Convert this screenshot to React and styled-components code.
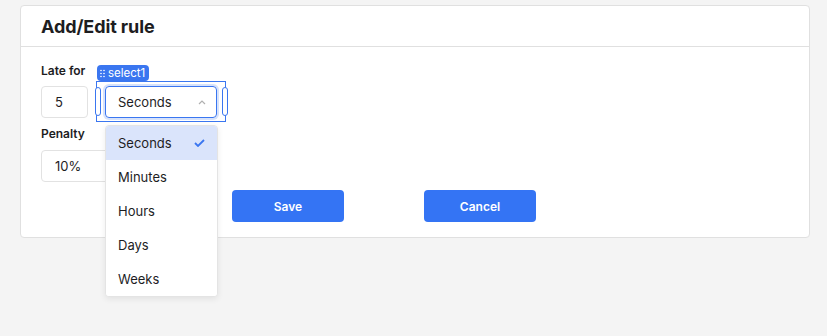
import React from 'react';
import styled, { createGlobalStyle } from 'styled-components';

const Global = createGlobalStyle`
  html, body {
    margin: 0;
    background: #f4f4f4;
    font-family: Inter, "Noto Sans", sans-serif;
    color: #1d1d1f;
  }
`;

const Page = styled.div`
  box-sizing: border-box;
  min-height: 100vh;
  padding: 5px 17px 0 20px;
`;

const Card = styled.div`
  background: #fff;
  border: 1px solid #e0e0e0;
  border-radius: 4px;
  width: 788px;
  box-sizing: content-box;
`;

const Header = styled.div`
  height: 40px;
  display: flex;
  align-items: center;
  padding: 0 20px;
  border-bottom: 1px solid #e0e0e0;
`;

const Title = styled.h1`
  margin: 0;
  font-size: 18px;
  font-weight: 700;
  letter-spacing: -0.1px;
`;

const Body = styled.div`
  padding: 16px 20px 15px;
  display: flex;
  flex-direction: column;
`;

const Label = styled.div`
  font-size: 12px;
  font-weight: 600;
  line-height: 16px;
  height: 16px;
  margin-bottom: ${p => p.$gap || 7}px;
`;

const Row = styled.div`
  display: flex;
  align-items: flex-start;
  gap: 17px;
  margin-bottom: 8px;
`;

const Input = styled.div`
  box-sizing: border-box;
  width: ${p => p.$w}px;
  height: 32px;
  border: 1px solid #e2e2e2;
  border-radius: 4px;
  display: flex;
  align-items: center;
  padding-left: 13px;
  font-size: 13px;
`;

const SelectWrap = styled.div`
  position: relative;
  width: 112px;
  height: 32px;
`;

const SelectBox = styled.div`
  box-sizing: border-box;
  width: 112px;
  height: 32px;
  border: 1px solid #3a76f0;
  border-radius: 4px;
  box-shadow: 0 0 0 2px #d6e2fb;
  display: flex;
  align-items: center;
  justify-content: space-between;
  padding: 0 10px 0 12px;
  font-size: 13px;
`;

const Outline = styled.div`
  position: absolute;
  left: -9px;
  top: -5px;
  width: 130px;
  height: 41px;
  box-sizing: border-box;
  border: 1px solid #3a76f0;
  pointer-events: none;
`;

const Handle = styled.div`
  position: absolute;
  top: 5px;
  ${p => (p.$side === 'left' ? 'left: -2px;' : 'right: -3px;')}
  width: 6px;
  height: 29px;
  box-sizing: border-box;
  border: 1px solid #3a76f0;
  border-radius: 4px;
  background: #fff;
`;

const Tag = styled.div`
  position: absolute;
  left: -8px;
  top: -21px;
  height: 16px;
  padding: 0 4px 0 3px;
  border-radius: 4px;
  background: #3a76f0;
  color: #fff;
  font-size: 11.5px;
  line-height: 16px;
  display: flex;
  align-items: center;
  gap: 2px;
`;

const Menu = styled.div`
  position: absolute;
  top: 39px;
  left: 0;
  width: 111px;
  background: #fff;
  border: 1px solid #e4e4e4;
  border-radius: 4px;
  box-shadow: 0 2px 6px rgba(0, 0, 0, 0.08);
  overflow: hidden;
  z-index: 2;
`;

const Option = styled.div`
  height: 34px;
  display: flex;
  align-items: center;
  justify-content: space-between;
  padding: 0 12px 0 12px;
  font-size: 13px;
  background: ${p => (p.$active ? '#dae4fb' : '#fff')};
`;

const Actions = styled.div`
  display: flex;
  gap: 80px;
  padding-left: 191px;
`;

const Button = styled.button`
  width: 112px;
  height: 32px;
  border: none;
  border-radius: 4px;
  background: #3474f4;
  color: #fff;
  font-family: inherit;
  font-size: 12px;
  font-weight: 600;
`;

const Grip = () => (
  <svg width="6" height="9" viewBox="0 0 6 9">
    {[0, 1, 2].map(r =>
      [0, 1].map(c => <circle key={`${r}${c}`} cx={1 + c * 3} cy={1.5 + r * 3} r="0.8" fill="#fff" />)
    )}
  </svg>
);

const options = ['Seconds', 'Minutes', 'Hours', 'Days', 'Weeks'];

export default function App() {
  return (
    <>
      <Global />
      <Page>
        <Card>
          <Header>
            <Title>Add/Edit rule</Title>
          </Header>
          <Body>
            <Label>Late for</Label>
            <Row>
              <Input $w={47}>5</Input>
              <SelectWrap>
                <SelectBox>
                  Seconds
                  <svg width="8" height="5" viewBox="0 0 8 5">
                    <path d="M1 4l3-3 3 3" fill="none" stroke="#b0b0b0" strokeWidth="1.2" />
                  </svg>
                </SelectBox>
                <Outline>
                  <Handle $side="left" />
                  <Handle $side="right" />
                </Outline>
                <Tag>
                  <Grip />
                  select1
                </Tag>
                <Menu>
                  {options.map((o, i) => (
                    <Option key={o} $active={i === 0}>
                      {o}
                      {i === 0 && (
                        <svg width="11" height="8" viewBox="0 0 11 8">
                          <path d="M1 4l3 3 6-6" fill="none" stroke="#3a76f0" strokeWidth="1.8" />
                        </svg>
                      )}
                    </Option>
                  ))}
                </Menu>
              </SelectWrap>
            </Row>
            <Label $gap={8}>Penalty</Label>
            <Row>
              <Input $w={112}>10%</Input>
            </Row>
            <Actions>
              <Button>Save</Button>
              <Button>Cancel</Button>
            </Actions>
          </Body>
        </Card>
      </Page>
    </>
  );
}
